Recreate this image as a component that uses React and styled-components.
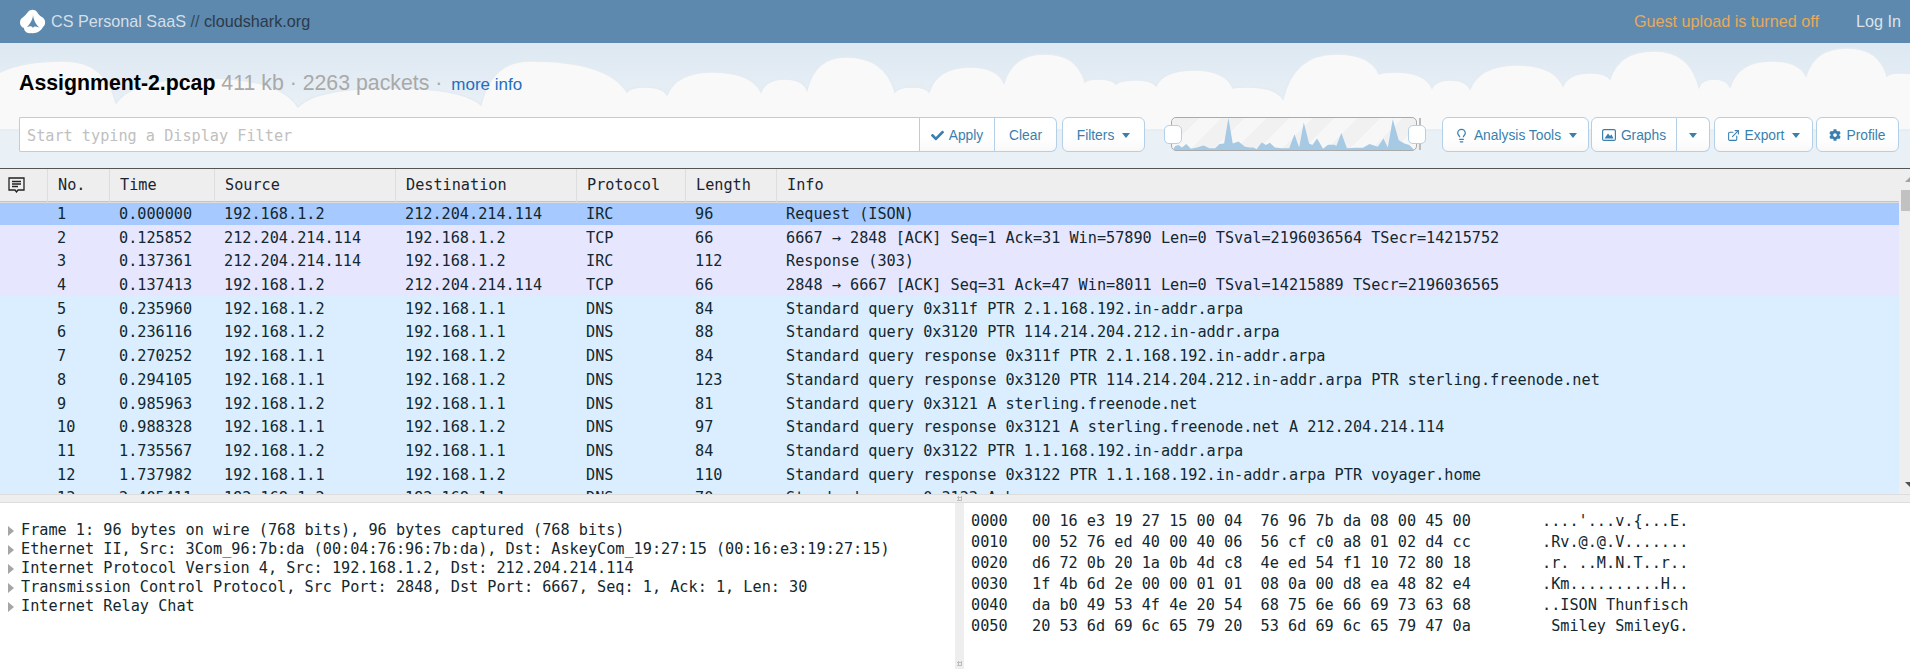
import React from 'react';
import styled, { createGlobalStyle } from 'styled-components';
import { FaCheck, FaCog } from 'react-icons/fa';
import { Lightbulb, ExternalLink } from 'lucide-react';

const MONO = `"DejaVu Sans Mono", monospace`;
const SANS = `"Liberation Sans", Arial, sans-serif`;
const COLUMNS = '48px 62px 105px 181px 181px 109px 91px 1fr';

const GlobalStyle = createGlobalStyle`
    html, body { margin: 0; padding: 0; background: #fff; overflow: hidden; }
`;

const Page = styled.div`
    width: 1910px;
    height: 669px;
    display: flex;
    flex-direction: column;
    font-family: ${SANS};
    overflow: hidden;
`;

const TopBar = styled.header`
    height: 43px;
    flex: none;
    background: #5d89ae;
    display: flex;
    align-items: center;
    padding: 0 9px 0 19px;
    font-size: 16.2px;
`;
const Brand = styled.div`
    display: flex;
    align-items: center;
    gap: 5px;
    color: #d5dfe8;
    flex: 1;
`;
const BrandSite = styled.span`
    color: #2c3a48;
`;
const BrandSlash = styled.span`
    color: #33495c;
`;
const GuestNote = styled.span`
    color: #e6aa5a;
    margin-right: 37px;
`;
const LogIn = styled.span`
    color: #dbe3ea;
`;

const Hero = styled.section`
    position: relative;
    height: 125px;
    flex: none;
    box-sizing: border-box;
    padding: 26px 0 0 19px;
    background: linear-gradient(180deg, #dde8f2 0%, #e9f0f6 50%);
    overflow: hidden;
`;
const Clouds = styled.svg`
    position: absolute;
    left: 0;
    top: 0;
`;
const TitleRow = styled.div`
    position: relative;
    height: 28px;
    line-height: 28px;
    font-size: 21.3px;
    color: #a9a9a9;
    white-space: nowrap;
`;
const FileName = styled.strong`
    color: #000;
`;
const MoreInfo = styled.a`
    color: #1f6fc1;
    font-size: 17px;
    margin-left: 3px;
`;
const FilterRow = styled.div`
    position: relative;
    display: flex;
    margin-top: 20px;
    height: 35px;
`;
const FilterInput = styled.input`
    box-sizing: border-box;
    width: 900px;
    height: 35px;
    border: 1px solid #b3d0e8;
    border-right: 0;
    border-radius: 2px 0 0 2px;
    background: #fff;
    padding: 2px 7px 0;
    font-family: ${MONO};
    font-size: 15.2px;
    outline: none;
    &::placeholder { color: #c0c0c0; opacity: 1; }
`;
const Button = styled.div`
    box-sizing: border-box;
    width: ${p => p.$w}px;
    margin-left: ${p => p.$gap || 0}px;
    height: 35px;
    padding-top: 1px;
    display: flex;
    align-items: center;
    justify-content: center;
    gap: 5px;
    border: 1px solid #b3d0e8;
    border-left-width: ${p => (p.$joined ? 0 : 1)}px;
    border-radius: ${p => p.$radius || '6px'};
    background: linear-gradient(180deg, #fff 0%, #fff 60%, #f8f8f8 100%);
    color: #3a7fae;
    font-size: 13.8px;
    white-space: nowrap;
    svg { flex: none; }
`;
const Caret = styled.span`
    width: 0;
    height: 0;
    margin-left: ${p => (p.$flush ? 0 : 3)}px;
    border-left: 4.5px solid transparent;
    border-right: 4.5px solid transparent;
    border-top: 5px solid #3a7fae;
`;
const RangeSlider = styled.div`
    position: relative;
    box-sizing: border-box;
    width: 246px;
    height: 34px;
    margin-left: 26px;
    border: 1.5px solid #aaa;
    border-radius: 5px;
    background: repeating-linear-gradient(-45deg, #f7f7f7 0 16px, #f1f1f1 16px 32px);
`;
const SliderChart = styled.svg`
    position: absolute;
    left: 0;
    top: 0;
    width: 100%;
    height: 100%;
`;
const SliderHandle = styled.div`
    position: absolute;
    top: 7px;
    ${p => (p.$right ? 'right: -10px;' : 'left: -8px;')}
    width: 18px;
    height: 19px;
    box-sizing: border-box;
    border: 1px solid #b3d0e8;
    border-radius: 5px;
    background: #fff;
`;
const SliderStop = styled.div`
    width: 2px;
    height: 32px;
    margin: 1px 21px 0 2px;
    background: #bbb;
`;

const PacketPane = styled.section`
    position: relative;
    height: 326px;
    flex: none;
    border-top: 1.5px solid #555;
    box-sizing: border-box;
    overflow: hidden;
    background: #eee;
    font-family: ${MONO};
    font-size: 15.2px;
`;
const HeadRow = styled.div`
    display: grid;
    grid-template-columns: ${COLUMNS};
    height: 32px;
    background: #eee;
    color: #1a2430;
    width: 1910px;
`;
const HeadCell = styled.div`
    box-sizing: border-box;
    padding-left: 10px;
    line-height: 33px;
    border-right: 1.5px solid #ddd;
    border-bottom: 1px solid #ddd;
    &:first-child {
        padding: 8px 0 0 8px;
        line-height: 0;
    }
    &:last-child { border-right: 0; }
`;
const Rows = styled.div`
    width: 1899px;
`;
const Row = styled.div`
    display: grid;
    grid-template-columns: ${COLUMNS};
    height: 23.7px;
    line-height: 27px;
    color: #12272e;
    white-space: pre;
    background: ${p => ({ sel: '#a6caff', tcp: '#e6e6ff', dns: '#daeeff' }[p.$kind])};
`;
const Cell = styled.div`
    padding-left: 9px;
`;
const ScrollTrack = styled.div`
    position: absolute;
    right: 0;
    top: 0;
    bottom: 0;
    width: 11px;
    background: #eee;
`;
const ScrollThumb = styled.div`
    position: absolute;
    top: 21px;
    left: 2px;
    right: 0;
    height: 21px;
    background: #c1c1c1;
`;
const ScrollArrow = styled.span`
    position: absolute;
    right: 0;
    ${p => (p.$down ? 'bottom: 7px;' : 'top: 8px;')}
    width: 0;
    height: 0;
    border-left: 5px solid transparent;
    ${p => (p.$down
        ? 'border-top: 5px solid #505050;'
        : 'border-bottom: 5px solid #a3a3a3;')}
`;

const Grip = styled.div`
    position: absolute;
    width: 5px;
    height: 5px;
    background-image: radial-gradient(#bdbdbd 1px, transparent 1.2px);
    background-size: 3px 3px;
`;
const SplitBar = styled.div`
    position: relative;
    height: 9px;
    flex: none;
    box-sizing: border-box;
    background: #eee;
    border-top: 1px solid #ddd;
    border-bottom: 1px solid #ddd;
    ${Grip} { left: 957px; top: 1px; }
`;
const DetailArea = styled.section`
    flex: 1;
    display: flex;
    background: #fff;
    font-family: ${MONO};
    font-size: 15.2px;
    color: #12272e;
    white-space: pre;
    min-height: 0;
`;
const TreePane = styled.div`
    width: 955px;
    flex: none;
    padding-top: 18px;
`;
const TreeLine = styled.div`
    height: 19px;
    line-height: 19px;
    display: flex;
    align-items: center;
    padding-left: 8px;
    gap: 7px;
`;
const Twisty = styled.span`
    width: 0;
    height: 0;
    flex: none;
    border-top: 5px solid transparent;
    border-bottom: 5px solid transparent;
    border-left: 6px solid #a5a5a5;
`;
const VSplit = styled.div`
    position: relative;
    width: 9px;
    flex: none;
    background: #eee;
    ${Grip} { left: 2px; bottom: 3px; }
`;
const HexPane = styled.div`
    flex: 1;
    padding: 8px 0 0 7px;
`;
const HexLine = styled.div`
    display: flex;
    height: 21px;
    line-height: 21px;
`;
const HexOffset = styled.span`
    width: 61px;
`;
const HexBytes = styled.span`
    width: 510px;
`;

const packets = [
    ['sel', '1', '0.000000', '192.168.1.2', '212.204.214.114', 'IRC', '96', 'Request (ISON)'],
    ['tcp', '2', '0.125852', '212.204.214.114', '192.168.1.2', 'TCP', '66', '6667 → 2848 [ACK] Seq=1 Ack=31 Win=57890 Len=0 TSval=2196036564 TSecr=14215752'],
    ['tcp', '3', '0.137361', '212.204.214.114', '192.168.1.2', 'IRC', '112', 'Response (303)'],
    ['tcp', '4', '0.137413', '192.168.1.2', '212.204.214.114', 'TCP', '66', '2848 → 6667 [ACK] Seq=31 Ack=47 Win=8011 Len=0 TSval=14215889 TSecr=2196036565'],
    ['dns', '5', '0.235960', '192.168.1.2', '192.168.1.1', 'DNS', '84', 'Standard query 0x311f PTR 2.1.168.192.in-addr.arpa'],
    ['dns', '6', '0.236116', '192.168.1.2', '192.168.1.1', 'DNS', '88', 'Standard query 0x3120 PTR 114.214.204.212.in-addr.arpa'],
    ['dns', '7', '0.270252', '192.168.1.1', '192.168.1.2', 'DNS', '84', 'Standard query response 0x311f PTR 2.1.168.192.in-addr.arpa'],
    ['dns', '8', '0.294105', '192.168.1.1', '192.168.1.2', 'DNS', '123', 'Standard query response 0x3120 PTR 114.214.204.212.in-addr.arpa PTR sterling.freenode.net'],
    ['dns', '9', '0.985963', '192.168.1.2', '192.168.1.1', 'DNS', '81', 'Standard query 0x3121 A sterling.freenode.net'],
    ['dns', '10', '0.988328', '192.168.1.1', '192.168.1.2', 'DNS', '97', 'Standard query response 0x3121 A sterling.freenode.net A 212.204.214.114'],
    ['dns', '11', '1.735567', '192.168.1.2', '192.168.1.1', 'DNS', '84', 'Standard query 0x3122 PTR 1.1.168.192.in-addr.arpa'],
    ['dns', '12', '1.737982', '192.168.1.1', '192.168.1.2', 'DNS', '110', 'Standard query response 0x3122 PTR 1.1.168.192.in-addr.arpa PTR voyager.home'],
    ['dns', '13', '2.405411', '192.168.1.2', '192.168.1.1', 'DNS', '70', 'Standard query 0x3123 A home'],
];

const treeItems = [
    'Frame 1: 96 bytes on wire (768 bits), 96 bytes captured (768 bits)',
    'Ethernet II, Src: 3Com_96:7b:da (00:04:76:96:7b:da), Dst: AskeyCom_19:27:15 (00:16:e3:19:27:15)',
    'Internet Protocol Version 4, Src: 192.168.1.2, Dst: 212.204.214.114',
    'Transmission Control Protocol, Src Port: 2848, Dst Port: 6667, Seq: 1, Ack: 1, Len: 30',
    'Internet Relay Chat',
];

const hexLines = [
    ['0000', '00 16 e3 19 27 15 00 04  76 96 7b da 08 00 45 00', "....'...v.{...E."],
    ['0010', '00 52 76 ed 40 00 40 06  56 cf c0 a8 01 02 d4 cc', '.Rv.@.@.V.......'],
    ['0020', 'd6 72 0b 20 1a 0b 4d c8  4e ed 54 f1 10 72 80 18', '.r. ..M.N.T..r..'],
    ['0030', '1f 4b 6d 2e 00 00 01 01  08 0a 00 d8 ea 48 82 e4', '.Km..........H..'],
    ['0040', 'da b0 49 53 4f 4e 20 54  68 75 6e 66 69 73 63 68', '..ISON Thunfisch'],
    ['0050', '20 53 6d 69 6c 65 79 20  53 6d 69 6c 65 79 47 0a', ' Smiley SmileyG.'],
];

// valley, then the peak of the hump that follows it
const cloudHumps = [
    [-20, 90, 64, 61], [116, 103, 205, 78], [298, 107, 390, 88], [481, 105, 530, 61],
    [627, 92, 645, 87], [667, 95, 712, 72], [761, 92, 785, 79], [807, 90, 846, 57],
    [895, 92, 912, 87], [929, 92, 970, 67], [1004, 83, 1045, 54], [1085, 82, 1098, 79],
    [1116, 84, 1136, 80], [1156, 86, 1194, 70], [1233, 88, 1247, 87], [1283, 99, 1336, 54],
    [1379, 74, 1396, 72], [1432, 88, 1450, 80], [1470, 89, 1518, 65], [1563, 86, 1590, 73],
    [1610, 79, 1654, 51], [1699, 87, 1714, 79], [1730, 87, 1771, 61], [1806, 76, 1847, 48],
    [1887, 76, 1899, 73], [1920, 76, 1920, 76],
];

const cloudPath = () => {
    let d = `M-20 130 L-20 90`;
    cloudHumps.slice(0, -1).forEach(([vx, , px, py], i) => {
        const [nx, ny] = cloudHumps[i + 1];
        d += ` Q${vx + (px - vx) * 0.2} ${py} ${px} ${py}`;
        d += ` Q${nx - (nx - px) * 0.2} ${py} ${nx} ${ny}`;
    });
    return `${d} L1920 130 Z`;
};

const chartPoints = '38,120 38,118 45,108 55,105 65,112 78,102 92,116 110,112 130,106 148,115 165,115 178,102 192,100 205,22 218,100 235,94 255,110 270,112 280,112 290,118 305,97 318,105 330,98 345,112 365,115 388,115 404,72 418,112 432,36 448,100 458,105 472,85 490,116 505,104 525,104 530,108 545,68 562,115 590,113 610,113 630,102 655,110 672,85 685,112 700,26 718,90 735,100 750,105 765,120';

const Logo = () => (
    <svg width="27" height="26" viewBox="0 0 27 26">
        <path fill="#fff" d="M9 3C11 0 16 0 18 3C20 6 21 7 23 8C27 10 27 16 24 18C22 22 17 25 12 24C8 25 5 22 5 19C1 18 0 13 2 10C4 8 6 7 9 3Z" />
        <path fill="#5d89ae" d="M14 6C14 10 11 15 8 18C11 17 13 17 14 19C15 17 18 17 22 20C18 17 15 13 14 6Z" />
    </svg>
);

const CommentIcon = () => (
    <svg width="17" height="16" viewBox="0 0 17 16" fill="none" stroke="#222" strokeWidth="1.3">
        <path d="M1 1H16V13H10L8.5 15L7 13H1Z" />
        <path d="M4 4.5H13M4 7H13M4 9.5H10" />
    </svg>
);

const GraphIcon = () => (
    <svg width="14" height="12" viewBox="0 0 14 12">
        <rect x="0.6" y="0.6" width="12.8" height="10.8" rx="1.5" fill="none" stroke="#3a7fae" strokeWidth="1.2" />
        <path fill="#3a7fae" d="M2.5 9.5L6 4.5L8 7L9.5 5.5L11.5 9.5Z" />
    </svg>
);

const App = () => {
    return (
        <Page>
            <GlobalStyle />
            <TopBar>
                <Brand>
                    <Logo />
                    <span>CS Personal SaaS <BrandSlash>//</BrandSlash> <BrandSite>cloudshark.org</BrandSite></span>
                </Brand>
                <GuestNote>Guest upload is turned off</GuestNote>
                <LogIn>Log In</LogIn>
            </TopBar>

            <Hero>
                <Clouds width="1910" height="125" viewBox="0 43 1910 125">
                    <path d={cloudPath()} fill="#f9f9f9" stroke="#e4ebf1" strokeWidth="1.5" />
                </Clouds>
                <TitleRow>
                    <FileName>Assignment-2.pcap</FileName> 411 kb · 2263 packets · <MoreInfo>more info</MoreInfo>
                </TitleRow>
                <FilterRow>
                    <FilterInput placeholder="Start typing a Display Filter" readOnly />
                    <Button $w={76} $radius="0"><FaCheck size={13} />Apply</Button>
                    <Button $w={62} $joined $radius="0 6px 6px 0">Clear</Button>
                    <Button $w={83} $gap={5}>Filters <Caret /></Button>
                    <RangeSlider>
                        <SliderChart viewBox="35 22 735 98" preserveAspectRatio="none">
                            <polygon points={chartPoints} fill="#a6c9e4" />
                        </SliderChart>
                        <SliderHandle />
                        <SliderHandle $right />
                    </RangeSlider>
                    <SliderStop />
                    <Button $w={147}><Lightbulb size={15} />Analysis Tools <Caret /></Button>
                    <Button $w={86} $gap={2} $radius="6px 0 0 6px"><GraphIcon />Graphs</Button>
                    <Button $w={33} $joined $radius="0 6px 6px 0"><Caret $flush /></Button>
                    <Button $w={99} $gap={4}><ExternalLink size={13} />Export <Caret /></Button>
                    <Button $w={83} $gap={3}><FaCog size={12} />Profile</Button>
                </FilterRow>
            </Hero>

            <PacketPane>
                <HeadRow>
                    <HeadCell><CommentIcon /></HeadCell>
                    <HeadCell>No.</HeadCell>
                    <HeadCell>Time</HeadCell>
                    <HeadCell>Source</HeadCell>
                    <HeadCell>Destination</HeadCell>
                    <HeadCell>Protocol</HeadCell>
                    <HeadCell>Length</HeadCell>
                    <HeadCell>Info</HeadCell>
                </HeadRow>
                <Rows>
                    {packets.map(([kind, ...cells]) => (
                        <Row key={cells[0]} $kind={kind}>
                            <span />
                            {cells.map((c, i) => <Cell key={i}>{c}</Cell>)}
                        </Row>
                    ))}
                </Rows>
                <ScrollTrack>
                    <ScrollArrow />
                    <ScrollThumb />
                    <ScrollArrow $down />
                </ScrollTrack>
            </PacketPane>

            <SplitBar><Grip /></SplitBar>

            <DetailArea>
                <TreePane>
                    {treeItems.map(t => (
                        <TreeLine key={t}><Twisty />{t}</TreeLine>
                    ))}
                </TreePane>
                <VSplit><Grip /></VSplit>
                <HexPane>
                    {hexLines.map(([off, bytes, text]) => (
                        <HexLine key={off}>
                            <HexOffset>{off}</HexOffset>
                            <HexBytes>{bytes}</HexBytes>
                            <span>{text}</span>
                        </HexLine>
                    ))}
                </HexPane>
            </DetailArea>
        </Page>
    );
};

export default App;
